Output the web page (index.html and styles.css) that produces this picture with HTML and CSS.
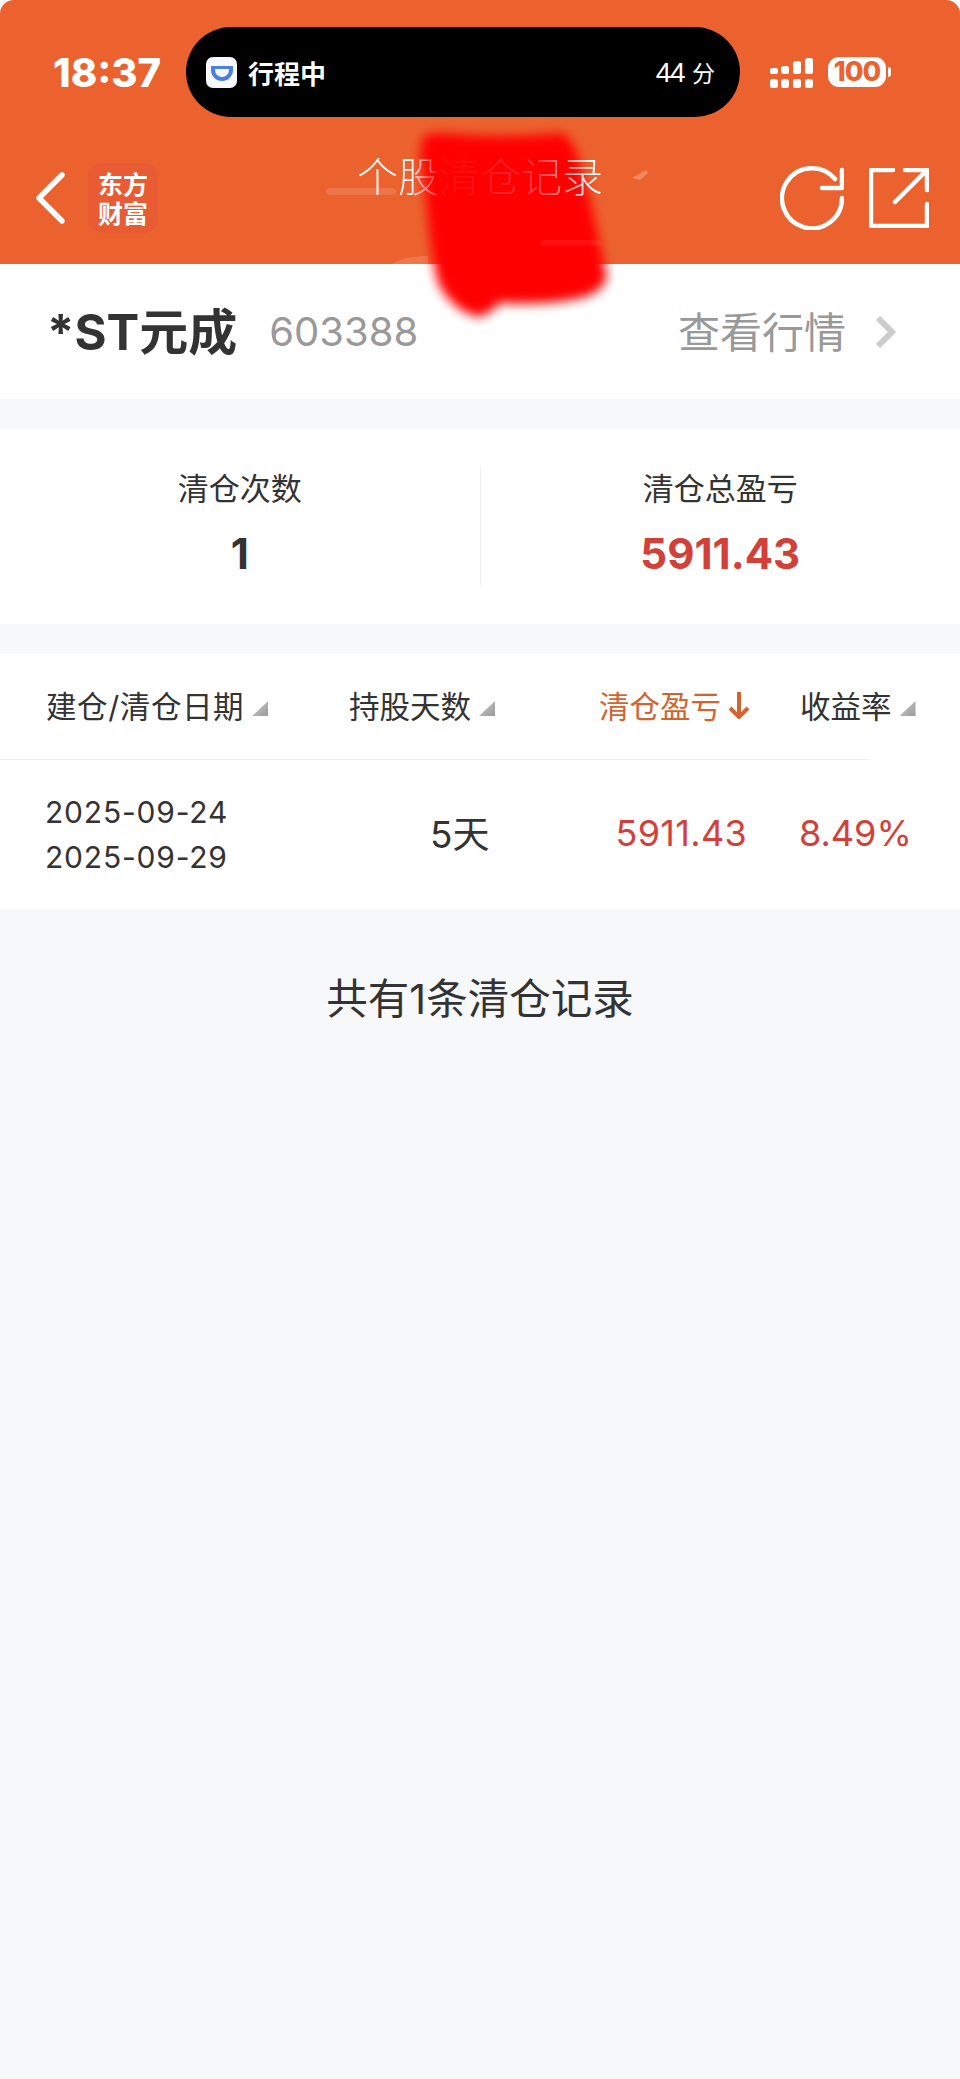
FILE: index.html
```html
<!DOCTYPE html>
<html>
<head lang="zh">
    <meta charset="UTF-8">
    <title>个股清仓记录</title>
    <link rel="stylesheet" href="styles.css">
</head>
<body>
<div class="page">
    <div class="header">
        <div class="status">
            <div class="time">18:37</div>
            <div class="island">
                <svg class="app-icon" viewBox="0 0 31 31">
                    <rect width="31" height="31" rx="7" fill="#f7f9fd"/>
                    <path d="M5 9h22v4a11 11 0 0 1-22 0z" fill="#4a7de6"/>
                    <path d="M9 12h14v1a7 7 0 0 1-14 0z" fill="#f7f9fd"/>
                </svg>
                <span class="trip">行程中</span>
                <span class="mins">44<small>分</small></span>
            </div>
            <svg class="signal" viewBox="0 0 45 31">
                <rect x="1" y="11" width="8" height="6" rx="2" fill="#fff"/>
                <rect x="1" y="22" width="8" height="9" rx="2.500" fill="#fff"/>
                <rect x="12" y="9" width="8" height="8" rx="2.500" fill="#fff"/>
                <rect x="12" y="22" width="8" height="9" rx="2.500" fill="#fff"/>
                <rect x="24" y="4" width="8" height="13" rx="2.500" fill="#fff"/>
                <rect x="24" y="22" width="8" height="9" rx="2.500" fill="#fff"/>
                <rect x="36" y="1" width="8" height="16" rx="2.500" fill="#fff"/>
                <rect x="36" y="22" width="8" height="9" rx="2.500" fill="#fff"/>
            </svg>
            <div class="battery"><span>100</span></div>
        </div>
        <div class="nav">
            <div class="nav-left">
                <svg class="back" viewBox="0 0 30 52"><path d="M27 3L4 26l23 23" fill="none" stroke="#fff" stroke-width="5.500" stroke-linecap="round" stroke-linejoin="round"/></svg>
                <div class="logo">东方<br>财富</div>
            </div>
            <div class="title">个股清仓记录</div>
            <div class="nav-right">
                <svg class="refresh" viewBox="0 0 64 64"><path d="M55 13A30 30 0 1 0 62 32" fill="none" stroke="#fff" stroke-width="4.500" stroke-linecap="round"/><path d="M62 4v18H42" fill="none" stroke="#fff" stroke-width="4.500" stroke-linecap="round" stroke-linejoin="round"/></svg>
                <svg class="share" viewBox="0 0 60 60"><path d="M24 2H2v56h56V36" fill="none" stroke="#fff" stroke-width="4.500" stroke-linecap="round" stroke-linejoin="round"/><path d="M36 2h22v20M58 2L26 34" fill="none" stroke="#fff" stroke-width="4.500" stroke-linecap="round" stroke-linejoin="round"/></svg>
            </div>
        </div>
    </div>

    <div class="stock">
        <div class="stock-name">*ST元成</div>
        <div class="stock-code">603388</div>
        <div class="stock-link">查看行情</div>
        <svg class="more" viewBox="0 0 22 34"><path d="M3 3l14 14L3 31" fill="none" stroke="#ccc" stroke-width="6"/></svg>
    </div>

    <div class="summary">
        <div class="summary-item">
            <div class="summary-label">清仓次数</div>
            <div class="summary-value">1</div>
        </div>
        <div class="summary-item divided">
            <div class="summary-label">清仓总盈亏</div>
            <div class="summary-value red">5911.43</div>
        </div>
    </div>

    <div class="records">
        <div class="thead">
            <div class="th date-head">建仓/清仓日期<i class="sort"></i></div>
            <div class="th">持股天数<i class="sort"></i></div>
            <div class="th active">清仓盈亏<svg class="arrow" viewBox="0 0 22 28"><path d="M11 1v25M2 17l9 9 9-9" fill="none" stroke="#d4642f" stroke-width="4"/></svg></div>
            <div class="th rate-head">收益率<i class="sort"></i></div>
        </div>
        <div class="line"></div>
        <div class="row">
            <div class="dates">2025-09-24<br>2025-09-29</div>
            <div class="days">5天</div>
            <div class="profit">5911.43</div>
            <div class="rate">8.49%</div>
        </div>
    </div>

    <div class="total">共有1条清仓记录</div>

    <svg class="scribble" viewBox="0 0 260 240">
        <defs><filter id="soft" x="-20%" y="-20%" width="140%" height="140%"><feGaussianBlur stdDeviation="5.500"/></filter></defs>
        <path d="M23 22C30 18 36 18 42 18C80 22 120 22 163 18C172 26 177 36 180 48C184 66 188 76 192 92C198 122 204 146 207 162C204 172 198 176 190 180C170 188 130 190 100 188C92 196 86 200 80 202C70 200 62 196 57 192C46 182 40 174 37 165C32 140 30 125 28 105C26 80 22 55 20 38z" fill="#ff0000" filter="url(#soft)"/>
    </svg>
    <svg class="smears" viewBox="0 0 960 264">
        <rect x="326" y="188" width="70" height="7" rx="3.500" fill="#fff" opacity=".12"/>
        <path d="M632 178l14-8 2 3-8 7z" fill="#fff" opacity=".25"/>
        <path d="M392 264c8-6 24-8 36-8v8z" fill="#fff" opacity=".14"/>
    </svg>
    <svg class="smears over" viewBox="0 0 960 264">
        <rect x="540" y="240" width="61" height="6" rx="3" fill="#fff" opacity=".06"/>
    </svg>
</div>
</body>
</html>
```

FILE: styles.css
```css
*{
    margin: 0px;
    padding: 0px;
    box-sizing: border-box;
}
body{
    background: #f7f8fa;
    font-family: "Inter", "Noto Sans CJK SC", sans-serif;
    color: #333;
}
.page{
    position: relative;
    width: 960px;
    height: 2079px;
    overflow: hidden;
    background: #f7f8fa;
}
.header{
    height: 264px;
    padding-top: 27px;
    background: #ec622f;
    border-radius: 14px 14px 0px 0px;
    color: #fff;
}
.status{
    display: flex;
    align-items: center;
    height: 90px;
}
.time{
    width: 186px;
    padding-left: 53px;
    font-size: 40px;
    font-weight: 800;
}
.island{
    display: flex;
    align-items: center;
    width: 554px;
    height: 90px;
    padding: 0px 25px 0px 20px;
    background: #000;
    border-radius: 45px;
}
.app-icon{
    width: 31px;
    height: 31px;
}
.trip{
    margin-left: 11px;
    font-size: 26px;
    font-weight: 700;
}
.mins{
    margin-left: auto;
    font-family: "Liberation Sans", sans-serif;
    font-size: 28px;
    letter-spacing: -1.500px;
}
.mins small{
    margin-left: 8px;
    font-family: "Noto Sans CJK SC", sans-serif;
    font-size: 23px;
    letter-spacing: 0px;
}
.signal{
    width: 45px;
    height: 31px;
    margin-left: 29px;
}
.battery{
    position: relative;
    width: 58px;
    height: 30px;
    margin-left: 14px;
    background: #fff;
    border-radius: 11px;
    color: #ec622f;
    font-size: 27px;
    font-weight: 800;
    line-height: 30px;
    text-align: center;
    letter-spacing: -1px;
}
.battery:after{
    content: "";
    position: absolute;
    right: -5px;
    top: 10px;
    width: 3px;
    height: 10px;
    background: #fff;
    border-radius: 0px 3px 3px 0px;
}
.nav{
    display: grid;
    grid-template-columns: 1fr auto 1fr;
    align-items: start;
    height: 147px;
    padding-top: 46px;
}
.nav-left{
    display: flex;
    align-items: center;
    padding-left: 35px;
}
.back{
    width: 30px;
    height: 52px;
}
.logo{
    width: 70px;
    height: 70px;
    margin-left: 23px;
    padding-top: 6px;
    background: #e95b33;
    border-radius: 14px;
    font-family: "Noto Sans CJK SC", sans-serif;
    font-size: 25px;
    font-weight: 700;
    line-height: 29px;
    text-align: center;
}
.title{
    position: relative;
    z-index: 2;
    margin-top: -6px;
    font-size: 41px;
    font-weight: 300;
    line-height: 41px;
    color: transparent;
    background: linear-gradient(90deg, #fff 0%, #fff 22%, #ff5a5a 30%, #ff0c0c 36%, #ff1010 48%, #ff2630 62%, #ff3a44 74%, #ff8a86 84%, #fff 95%);
    -webkit-background-clip: text;
    background-clip: text;
}
.nav-right{
    display: flex;
    justify-content: flex-end;
    align-items: center;
    gap: 25px;
    margin-top: 3px;
    padding-right: 31px;
}
.refresh{
    width: 64px;
    height: 64px;
}
.share{
    width: 60px;
    height: 60px;
}
.stock{
    display: flex;
    align-items: center;
    height: 135px;
    padding: 0px 63px 0px 47px;
    background: #fff;
}
.stock-name{
    margin-bottom: 6px;
    font-size: 49px;
    font-weight: 700;
}
.stock-code{
    margin-left: 32px;
    color: #999;
    font-size: 40px;
}
.stock-link{
    margin-left: auto;
    margin-bottom: 4px;
    color: #999;
    font-size: 42px;
}
.more{
    width: 22px;
    height: 34px;
    margin-left: 29px;
}
.summary{
    display: flex;
    height: 195px;
    margin-top: 30px;
    padding-top: 38px;
    background: #fff;
}
.summary-item{
    flex: 1;
    height: 118px;
    text-align: center;
}
.divided{
    border-left: 1px solid #f0f0f0;
}
.summary-label{
    font-size: 31px;
    line-height: 44px;
}
.summary-value{
    margin-top: 20px;
    font-size: 42px;
    font-weight: 700;
    line-height: 46px;
}
.red{
    color: #d3403a;
}
.records{
    height: 255px;
    margin-top: 30px;
    background: #fff;
}
.thead,.row{
    display: grid;
    grid-template-columns: 303px 250px 203px 1fr;
    padding-left: 46px;
    align-items: center;
}
.thead{
    height: 105px;
    padding-bottom: 4px;
}
.th{
    display: flex;
    align-items: center;
    font-size: 30.500px;
}
.sort{
    width: 16px;
    height: 15px;
    margin: 8px 0px 0px 8px;
    background: linear-gradient(135deg, #ccc, #999);
    clip-path: polygon(100% 0px, 100% 100%, 0px 100%);
}
.active{
    color: #d4642f;
}
.date-head{
    letter-spacing: .6px;
}
.rate-head{
    margin-left: -2px;
}
.arrow{
    width: 22px;
    height: 28px;
    margin-left: 7px;
}
.line{
    width: 869px;
    height: 1px;
    background: #eee;
}
.row{
    height: 149px;
}
.dates{
    margin-left: -1px;
    font-size: 30px;
    line-height: 45px;
    letter-spacing: .8px;
}
.days{
    padding-left: 81px;
    padding-bottom: 6px;
    font-size: 37px;
}
.profit,.rate{
    padding-bottom: 4px;
    color: #d3403a;
    font-size: 36px;
    text-align: right;
}
.profit{
    padding-right: 55px;
    letter-spacing: .3px;
}
.rate{
    margin-left: -3px;
    padding-right: 50px;
    white-space: nowrap;
}
.total{
    margin-top: 63px;
    font-size: 41.500px;
    line-height: 54px;
    text-align: center;
}
.scribble{
    position: absolute;
    left: 400px;
    top: 115px;
    width: 260px;
    height: 240px;
    z-index: 1;
}
.smears{
    position: absolute;
    left: 0px;
    top: 0px;
    width: 960px;
    height: 264px;
}
.over{
    z-index: 3;
}
```
